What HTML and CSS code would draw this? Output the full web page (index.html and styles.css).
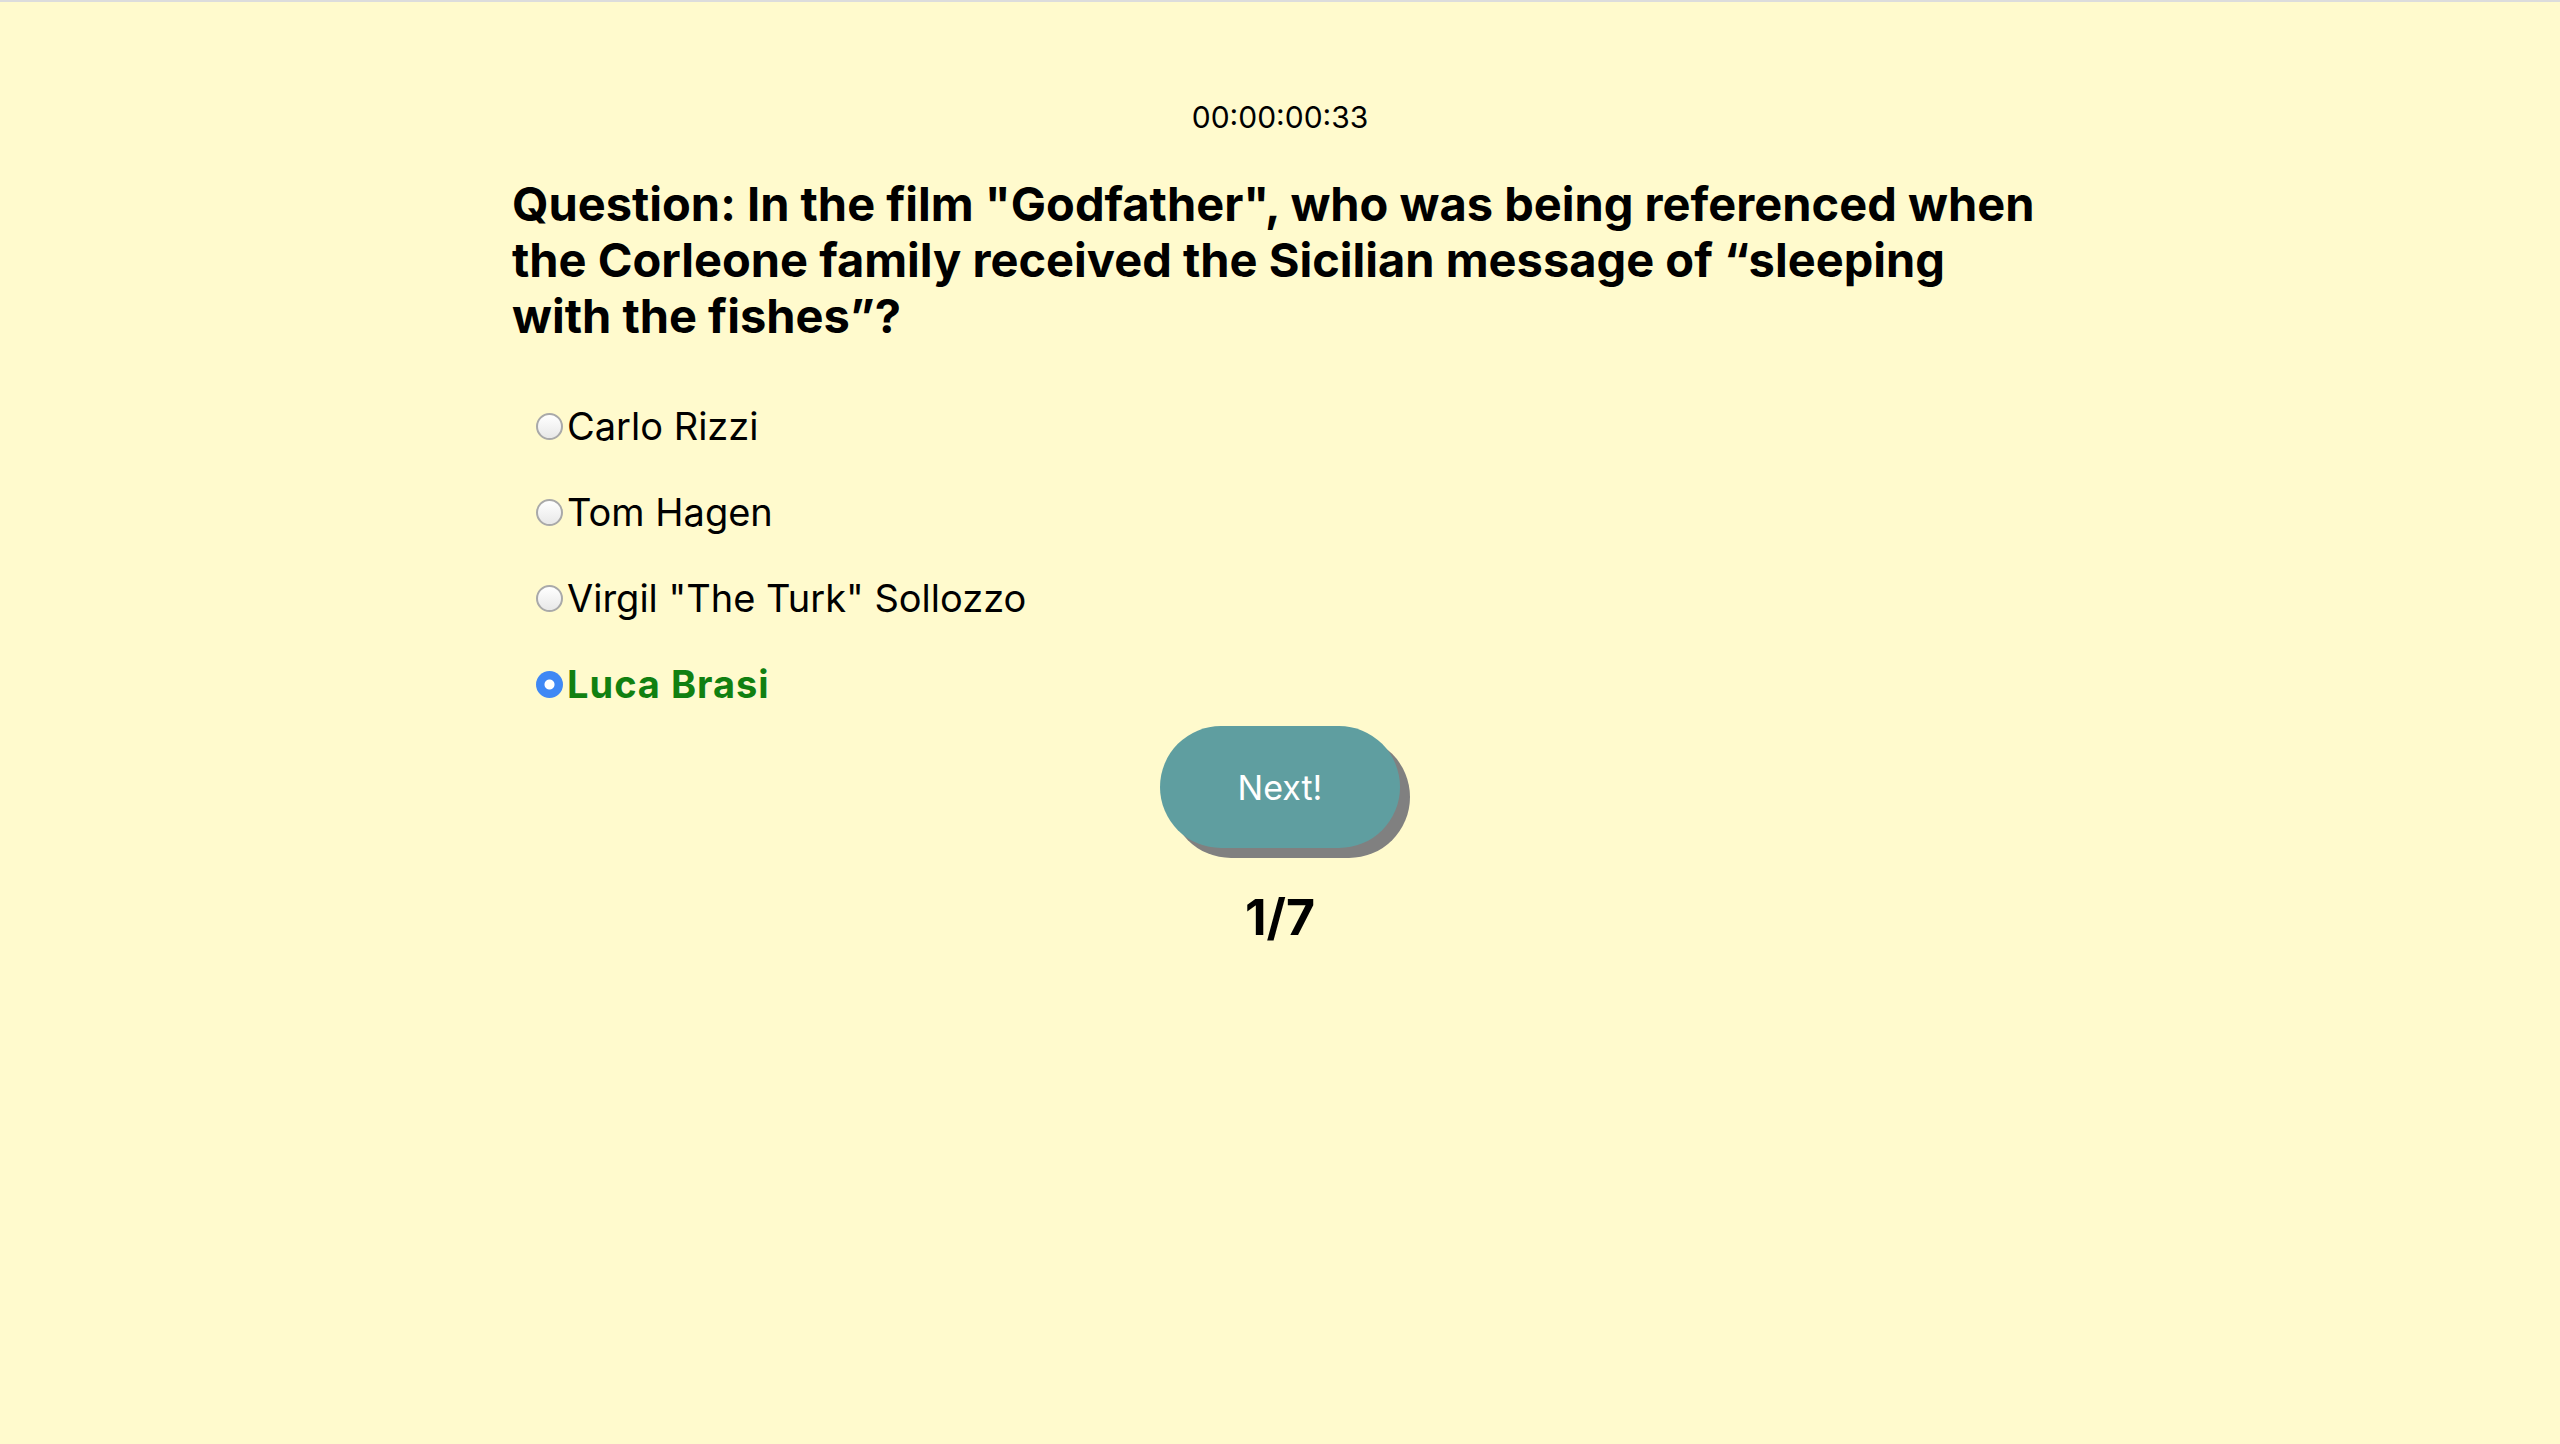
FILE: index.html
```html
<!DOCTYPE html>
<html lang="en">
<head>
<meta charset="utf-8">
<title>Quiz</title>
<link rel="stylesheet" href="styles.css">
</head>
<body>
<div class="page">
  <div class="quiz">
    <div class="timer">00:00:00:33</div>
    <h1 class="question">Question: In the film "Godfather", who was being referenced when the Corleone family received the Sicilian message of “sleeping with the fishes”?</h1>
    <div class="options">
      <label class="option"><input type="radio" name="answer" class="radio"><span>Carlo Rizzi</span></label>
      <label class="option"><input type="radio" name="answer" class="radio"><span>Tom Hagen</span></label>
      <label class="option"><input type="radio" name="answer" class="radio"><span>Virgil "The Turk" Sollozzo</span></label>
      <label class="option option-correct"><input type="radio" name="answer" class="radio" checked><span>Luca Brasi</span></label>
    </div>
    <div class="actions">
      <button class="next-btn" type="button">Next!</button>
    </div>
    <div class="progress">1/7</div>
  </div>
</div>
</body>
</html>
```

FILE: styles.css
```css
html, body {
  margin: 0;
  padding: 0;
  height: 100%;
}
body {
  background: #fffacd;
  font-family: Inter, "Noto Sans", "Liberation Sans", sans-serif;
  color: #000;
  border-top: 2px solid #dcdcdc;
  box-sizing: border-box;
}
.page {
  display: flex;
  justify-content: center;
}
.quiz {
  width: 1536px;
  display: flex;
  flex-direction: column;
}
.timer {
  margin-top: 97px;
  text-align: center;
  font-size: 30px;
  line-height: 36px;
  font-weight: 400;
}
.question {
  margin: 41px 0 0 0;
  font-size: 47px;
  line-height: 56px;
  font-weight: 700;
  padding-right: 6px;
}
.options {
  margin-top: 59px;
  padding-left: 24px;
  display: flex;
  flex-direction: column;
  gap: 40px;
}
.option {
  display: flex;
  align-items: center;
  gap: 4px;
  font-size: 38px;
  line-height: 46px;
}
.option-text {
  letter-spacing: 0;
}
.radio {
  appearance: none;
  -webkit-appearance: none;
  margin: 0;
  width: 27px;
  height: 27px;
  border-radius: 50%;
  border: 2px solid #a9a9a9;
  background: linear-gradient(#ffffff, #e8e8e8);
  box-sizing: border-box;
  flex: none;
}
.radio:checked {
  border: none;
  background: radial-gradient(circle, #ffffff 0 4.5px, #3f88f5 5.5px);
}
.option-correct {
  color: #118011;
  font-weight: 700;
  letter-spacing: 1px;
}
.actions {
  display: flex;
  justify-content: center;
  margin-top: 19px;
}
.next-btn {
  width: 240px;
  height: 122px;
  border: none;
  border-radius: 61px;
  background: #5f9ea0;
  color: #ffffff;
  font-family: Inter, "Noto Sans", "Liberation Sans", sans-serif;
  font-size: 34px;
  box-shadow: 10px 10px 0 #808080;
  padding: 0;
}
.progress {
  margin-top: 41px;
  text-align: center;
  font-size: 50px;
  line-height: 56px;
  font-weight: 700;
}
```
